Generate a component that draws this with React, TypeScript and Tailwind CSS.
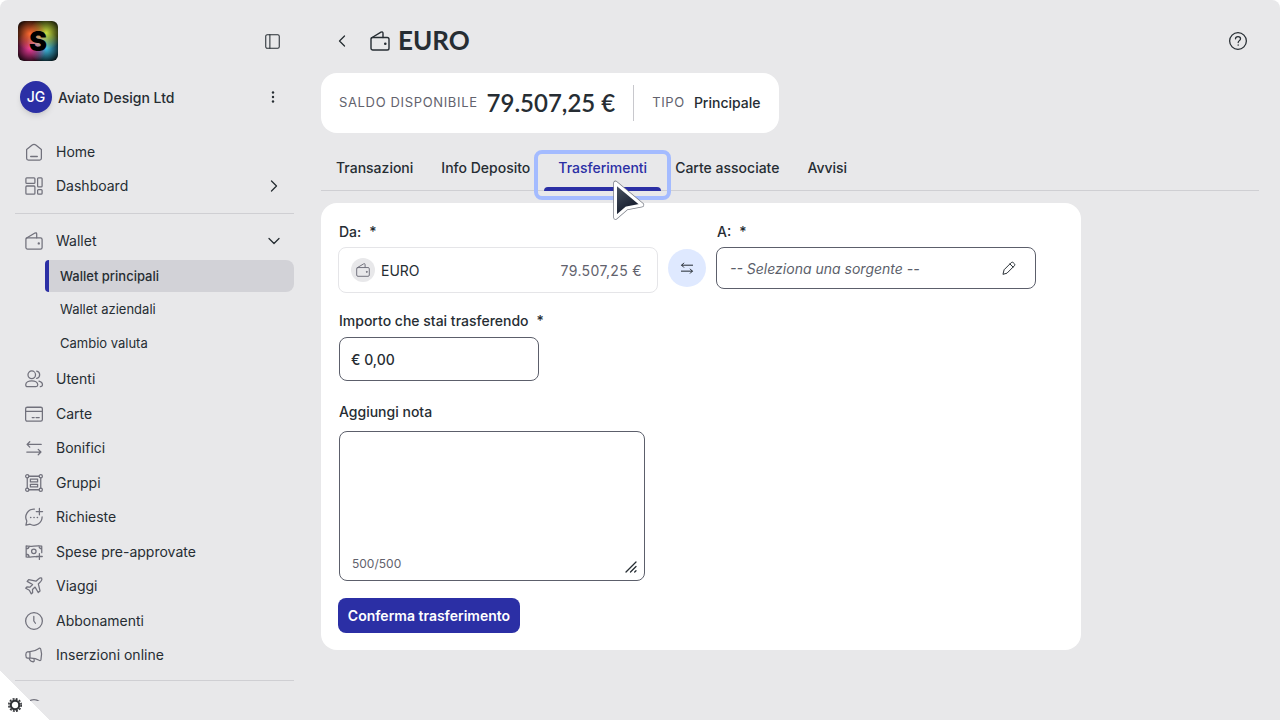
import type { ReactNode } from 'react';

type IconName =
  | 'home'
  | 'dashboard'
  | 'wallet'
  | 'users'
  | 'card'
  | 'transfer'
  | 'group'
  | 'request'
  | 'cash'
  | 'plane'
  | 'clock'
  | 'megaphone'
  | 'pencil'
  | 'panel'
  | 'help'
  | 'support';

const paths: Record<IconName, ReactNode> = {
  home: <path d="M1.800 7.200 8 2.200q2-1.500 4 0l6.200 5V17q0 2-2 2H3.800q-2 0-2-2ZM6.300 15h7.400" />,
  dashboard: (
    <>
      <rect x="1" y="1" width="10" height="6" rx="1" />
      <rect x="1" y="10" width="10" height="9" rx="1" />
      <rect x="14" y="1" width="5" height="10" rx="1" />
      <rect x="14" y="14" width="5" height="5" rx="1" />
    </>
  ),
  wallet: (
    <>
      <rect x="1" y="6.500" width="18" height="12.500" rx="1.800" />
      <path d="M1.300 7 11 1.200q2-.9 2 1.100v4.200" />
      <circle cx="15.300" cy="12.700" r=".6" fill="currentColor" />
    </>
  ),
  users: (
    <>
      <circle cx="7.500" cy="5.300" r="4.200" />
      <path d="M.8 16.500c0-3 3.500-4.500 6.700-4.500s6.700 1.500 6.700 4.500q0 2-2 2H2.800q-2 0-2-2ZM13 1.200a4.200 4.200 0 0 1 0 8.200M15.500 12.300c2.500.6 3.900 2.300 3.900 4.200q0 2-2.400 2" />
    </>
  ),
  card: (
    <>
      <rect x=".7" y="2.500" width="18.600" height="15.500" rx="1.800" />
      <path d="M.7 7h18.600M8 14h2.200M12.300 14h3.500" />
    </>
  ),
  transfer: <path d="M18 6H2.500M5.300 3 2.300 6l3 3M2 14.500h15.500M14.700 11.500l3 3-3 3" />,
  group: (
    <>
      <circle cx="2.500" cy="2.500" r="1.800" />
      <circle cx="17.500" cy="2.500" r="1.800" />
      <circle cx="2.500" cy="17.500" r="1.800" />
      <circle cx="17.500" cy="17.500" r="1.800" />
      <path d="M4.300 2.500h11.400M4.300 17.500h11.400M2.500 4.300v11.400M17.500 4.300v11.400M6 5.800h8v3H6ZM6 11.400h8v3H6Z" />
    </>
  ),
  request: (
    <>
      <path d="M10.500 1.200A9 9 0 0 0 2 14.500L1 19l4.700-1A9 9 0 0 0 19 10M16 .5v7M12.500 4h7" />
      <path strokeWidth="1.800" d="M6.300 10.500h.1M10 10.500h.1M13.700 10.500h.1" />
    </>
  ),
  cash: (
    <>
      <path d="M13.500 15.500c-4-1-8 1-12.200 0V3.300c5.500 1.400 11-1 17.300.2v7.200M1.300 6.500q3 0 3.300-3M15.500 3.200q.3 3 3.100 3.200M1.300 12.500q3 0 3.300 3M16 11.800v6.400M12.800 15h6.400" />
      <circle cx="9.800" cy="9.200" r="2.500" />
    </>
  ),
  plane: (
    <path d="M12.200 4.700 15 2.200q2-1.600 3.500-.9.900 1.600-.9 3.600l-2.800 2.800 1.900 7.800-2 1.700-3.500-6-2.900 2.700.2 3.500-1.500 1.300-2.200-4-4-2.200 1.300-1.400 3.500.2 2.800-3-6-3.400 1.700-2Z" />
  ),
  clock: (
    <>
      <circle cx="10" cy="10" r="9.300" />
      <path d="M9.800 5v5l1.800 2.500" />
    </>
  ),
  megaphone: (
    <path d="M5.500 6.200Q11 6 15.500 2.700q1.500-.8 2 .8 1.800 5.300.2 11.700-.6 1.500-2 .6-4.500-2.600-10.200-2.300ZM5.500 6.200l-3 .4Q.9 7 .9 10t1.700 3.500h2.900M4.500 13.500q.5 2.500 2.200 3.300l2.500.8q1.500-.5 1-2.200l-.6-1.200" />
  ),
  pencil: <path d="m1.500 18.500 1.500-6L13.300 2.200q1.500-1.200 3 .3l1.200 1.200q1.500 1.500.3 3L7.500 17ZM11.300 4.200l4.500 4.500" />,
  panel: (
    <>
      <rect x="1" y="1" width="18" height="18" rx="2" />
      <path d="M6.500 1v18" />
    </>
  ),
  help: (
    <>
      <circle cx="10" cy="10" r="9.300" />
      <path d="M7.200 7.500c.2-3.200 5.600-3 5.600 0 0 2-2.600 2.200-2.600 4.300M10.200 14.300v.3" />
    </>
  ),
  support: <circle cx="10" cy="10" r="9.300" />,
};

function Icon({ name, className = 'size-[18px] text-[#71717c]' }: { name: IconName; className?: string }) {
  return (
    <svg
      viewBox="0 0 20 20"
      fill="none"
      stroke="currentColor"
      strokeWidth="1.400"
      strokeLinecap="round"
      strokeLinejoin="round"
      aria-hidden="true"
      className={`shrink-0 overflow-visible ${className}`}
    >
      {paths[name]}
    </svg>
  );
}

function Chevron({ d, className }: { d: string; className: string }) {
  return (
    <svg viewBox="0 0 12 12" fill="none" stroke="currentColor" strokeWidth="1.300" strokeLinecap="round" strokeLinejoin="round" aria-hidden="true" className={className}>
      <path d={d} />
    </svg>
  );
}

const mainItems: { icon: IconName; label: string }[] = [
  { icon: 'users', label: 'Utenti' },
  { icon: 'card', label: 'Carte' },
  { icon: 'transfer', label: 'Bonifici' },
  { icon: 'group', label: 'Gruppi' },
  { icon: 'request', label: 'Richieste' },
  { icon: 'cash', label: 'Spese pre-approvate' },
  { icon: 'plane', label: 'Viaggi' },
  { icon: 'clock', label: 'Abbonamenti' },
  { icon: 'megaphone', label: 'Inserzioni online' },
];

const tabs = ['Transazioni', 'Info Deposito', 'Trasferimenti', 'Carte associate', 'Avvisi'];

function NavLink({ icon, label, children }: { icon: IconName; label: string; children?: ReactNode }) {
  return (
    <a href="#" className="flex h-[34px] items-center pl-[10px] pr-[14px] text-sm text-[#262d33]">
      <Icon name={icon} />
      <span className="ml-[13px] flex-1">{label}</span>
      {children}
    </a>
  );
}

function Logo() {
  return (
    <div className="flex size-10 items-center justify-center overflow-hidden rounded-md bg-black bg-[radial-gradient(circle_at_50%_50%,#ffffff66,transparent_40%),radial-gradient(circle_at_30%_32%,#ff6a30,transparent_42%),radial-gradient(circle_at_70%_30%,#c8e040,transparent_42%),radial-gradient(circle_at_30%_68%,#f03c9c,transparent_42%),radial-gradient(circle_at_70%_68%,#40c0e8,transparent_42%)]">
      <span className="text-[27px] leading-none font-black text-black">S</span>
    </div>
  );
}

function Sidebar() {
  return (
    <aside className="flex w-[309px] shrink-0 flex-col pr-[15px] pl-[15px] pt-[21px] pb-[19px]">
      <div className="flex items-center justify-between pr-[14px] pl-[3px]">
        <Logo />
        <button type="button" aria-label="Riduci menu">
          <Icon name="panel" className="size-[15px] text-[#262d33]" />
        </button>
      </div>

      <div className="mt-5 flex h-8 items-center pr-[19px] pl-[5px]">
        <div className="flex size-8 items-center justify-center rounded-full bg-[#2b2fa5] text-sm font-medium text-white shadow-md">JG</div>
        <span className="ml-[6px] flex-1 pt-px text-sm font-medium text-[#262d33]">Aviato Design Ltd</span>
        <button type="button" aria-label="Altre opzioni">
          <svg viewBox="0 0 4 12" fill="currentColor" aria-hidden="true" className="h-3 w-1 text-[#262d33]">
            <circle cx="2" cy="1.500" r="1.200" />
            <circle cx="2" cy="6" r="1.200" />
            <circle cx="2" cy="10.500" r="1.200" />
          </svg>
        </button>
      </div>

      <nav className="mt-[22px] min-h-0 flex-1 overflow-hidden">
        <NavLink icon="home" label="Home" />
        <NavLink icon="dashboard" label="Dashboard">
          <Chevron d="m3.500 1 5 5-5 5" className="size-3" />
        </NavLink>
        <hr className="mt-[10px] mb-[10px] border-[#cfcfd3]" />
        <NavLink icon="wallet" label="Wallet">
          <Chevron d="m1 3.500 5 5 5-5" className="size-3" />
        </NavLink>
        <div className="mt-[2px] ml-[30px] text-[13px] text-[#262d33]">
          <a href="#" aria-current="page" className="flex h-8 items-center rounded-l-[4px] rounded-r-lg border-l-4 border-[#2b2fa5] bg-[#d2d2d7] pt-px pl-[11px] font-medium">
            Wallet principali
          </a>
          <a href="#" className="flex h-9 items-center pl-[15px]">Wallet aziendali</a>
          <a href="#" className="flex h-8 items-center pl-[15px]">Cambio valuta</a>
        </div>
        <div className="mt-[2px] grid h-[311px] auto-rows-fr">
          {mainItems.map((item) => (
            <NavLink key={item.label} {...item} />
          ))}
        </div>
        <hr className="mt-[7px] mb-[10px] border-[#cfcfd3]" />
        <a href="#" aria-label="Supporto" className="flex h-[34px] items-center pl-[10px]">
          <Icon name="support" />
        </a>
      </nav>
    </aside>
  );
}

function Required() {
  return <span className="ml-2">*</span>;
}

function TransferForm() {
  return (
    <form className="w-full max-w-[760px] rounded-2xl bg-white px-[17px] pt-[19px] pb-[17px] text-sm text-[#262d33]">
      <div className="flex items-start gap-[10px]">
        <div className="max-w-[320px] flex-1">
          <label htmlFor="from" className="block pl-px font-medium">
            Da:<Required />
          </label>
          <button id="from" type="button" className="mt-[5px] flex h-[46px] w-full items-center rounded-lg border border-[#e5e5e8] pr-[15px] pl-3">
            <span className="flex size-6 items-center justify-center rounded-full bg-[#e8e8ea]">
              <Icon name="wallet" className="size-[14px] text-[#71717c]" />
            </span>
            <span className="ml-[6px] flex-1 pt-px text-left">EURO</span>
            <span className="pt-px tracking-wide text-[#62626d]">79.507,25 €</span>
          </button>
        </div>
        <button type="button" aria-label="Inverti" className="mt-[27px] flex size-[38px] items-center justify-center rounded-full bg-[#dfe9ff]">
          <Icon name="transfer" className="size-[14px] text-[#1e252b]" />
        </button>
        <div className="max-w-[320px] flex-1">
          <label htmlFor="to" className="block pl-px font-medium">
            A:<Required />
          </label>
          <button id="to" type="button" className="mt-[5px] flex h-[42px] w-full items-center justify-between rounded-lg border border-[#5c5f6b] pr-[19px] pl-[13px]">
            <span className="pt-px text-[#5c5f6b] italic">-- Seleziona una sorgente --</span>
            <Icon name="pencil" className="size-[14px] text-[#262d33]" />
          </button>
        </div>
      </div>

      <div className="mt-[18px] pl-px">
        <label htmlFor="amount" className="block font-medium">
          Importo che stai trasferendo<Required />
        </label>
        <input id="amount" defaultValue="€ 0,00" className="mt-[6px] block h-11 w-[200px] rounded-lg border border-[#5c5f6b] px-[11px] font-medium" />
      </div>

      <div className="mt-[21px] pl-px">
        <label htmlFor="note" className="block font-medium">
          Aggiungi nota
        </label>
        <div className="relative mt-[9px] w-[306px]">
          <textarea id="note" maxLength={500} className="block h-[150px] w-full resize-none rounded-lg border border-[#5c5f6b] p-3" />
          <span className="absolute bottom-[9px] left-[13px] text-xs text-[#62626d]">500/500</span>
          <svg viewBox="0 0 12 12" fill="none" stroke="currentColor" strokeWidth="1.300" strokeLinecap="round" aria-hidden="true" className="absolute right-2 bottom-2 size-3">
            <path d="M1 11 11 1M5.500 11 11 5.500M9.700 11 11 9.700" />
          </svg>
        </div>
      </div>

      <button type="submit" className="mt-[17px] h-[35px] w-[182px] rounded-lg bg-[#2b2fa5] font-semibold text-white">
        Conferma trasferimento
      </button>
    </form>
  );
}

export default function App() {
  return (
    <div className="relative flex h-screen overflow-hidden rounded-t-lg bg-[#e8e8ea] font-['Inter',sans-serif]">
      <Sidebar />

      <main className="min-w-0 flex-1 pt-5 pr-[21px] pl-3">
        <header className="flex h-[41px] items-center pr-3 pl-[15px] text-[#262d33]">
          <button type="button" aria-label="Indietro">
            <Chevron d="m8.500 1-5 5 5 5" className="size-3" />
          </button>
          <Icon name="wallet" className="ml-[22px] size-5" />
          <h1 className="ml-2 flex-1 pb-[2px] font-['Lato',sans-serif] text-[26px] leading-9 font-bold">EURO</h1>
          <button type="button" aria-label="Aiuto">
            <Icon name="help" className="size-[18px]" />
          </button>
        </header>

        <section className="mt-3 flex h-[60px] w-fit items-center rounded-2xl bg-white px-[18px]">
          <span className="text-[13px] tracking-wider text-[#62626d]">SALDO DISPONIBILE</span>
          <strong className="ml-[9px] font-['Lato',sans-serif] text-2xl font-semibold text-[#262d33]">79.507,25 €</strong>
          <div className="ml-[18px] flex h-9 items-center border-l border-[#c8c8cd] pl-[18px]">
            <span className="text-[13px] tracking-wider text-[#62626d]">TIPO</span>
            <span className="ml-[9px] text-sm font-medium text-[#262d33]">Principale</span>
          </div>
        </section>

        <div role="tablist" className="mt-[17px] mb-3 flex h-[41px] border-b border-[#cfcfd3] pl-px">
          {tabs.map((tab) =>
            tab === 'Trasferimenti' ? (
              <button key={tab} type="button" role="tab" aria-selected="true" className="relative px-[14px] pb-[5px] text-sm font-medium text-[#2b2fa5]">
                {tab}
                <span className="absolute inset-x-0 -bottom-px h-1 rounded-t-sm bg-[#2b2fa5]" />
                <span className="absolute -inset-x-[10px] top-0 -bottom-[10px] rounded-lg border-4 border-[#a4bbff]" />
                <svg viewBox="0 0 34 42" aria-hidden="true" className="absolute top-[30px] left-[69px] z-10 h-[42px] w-[34px] overflow-visible">
                  <defs>
                    <linearGradient id="pointer" x1="0" y1="0" x2=".5" y2="1">
                      <stop offset="0" stopColor="#515b68" />
                      <stop offset="1" stopColor="#0b1224" />
                    </linearGradient>
                  </defs>
                  <path d="M2.500 3v34.500L13.500 28l15.500-3Z" fill="none" stroke="#7b7f88" strokeWidth="4.500" strokeLinejoin="round" />
                  <path d="M2.500 3v34.500L13.500 28l15.500-3Z" fill="url(#pointer)" stroke="#fff" strokeWidth="3" strokeLinejoin="round" />
                </svg>
              </button>
            ) : (
              <button key={tab} type="button" role="tab" aria-selected="false" className="px-[14px] pb-[5px] text-sm font-medium text-[#262d33]">
                {tab}
              </button>
            ),
          )}
        </div>

        <TransferForm />
      </main>

      <button
        type="button"
        aria-label="Impostazioni"
        className="absolute bottom-0 left-0 flex size-[50px] items-end bg-[linear-gradient(to_top_right,#fff_50%,transparent_50%)] pb-2 pl-2"
      >
        <svg viewBox="0 0 14 14" fill="none" stroke="#2f3135" aria-hidden="true" className="size-[14px]">
          <circle cx="7" cy="7" r="4.300" strokeWidth="2.200" />
          <circle cx="7" cy="7" r="6.200" strokeWidth="1.600" strokeDasharray="1.950 1.300" />
        </svg>
      </button>
    </div>
  );
}
